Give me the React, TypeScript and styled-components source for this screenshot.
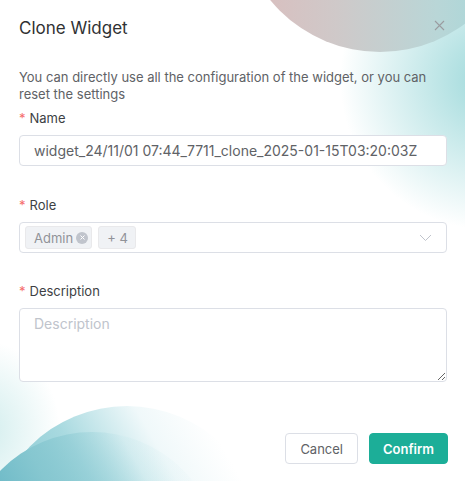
import React from 'react'
import styled, { createGlobalStyle } from 'styled-components'

const GlobalStyle = createGlobalStyle`
  html, body {
    margin: 0;
    padding: 0;
    background: #ffffff;
  }
  body {
    font-family: Inter, "Noto Sans", "Liberation Sans", sans-serif;
  }
`

const Dialog = styled.div`
  position: relative;
  width: 465px;
  height: 481px;
  overflow: hidden;
  background: #ffffff;
  box-sizing: border-box;
  padding: 0 18px 0 19px;
  display: flex;
  flex-direction: column;
`

const Blob = styled.div<{ $x: number; $y: number; $r: number; $bg: string }>`
  position: absolute;
  left: ${(p) => p.$x - p.$r}px;
  top: ${(p) => p.$y - p.$r}px;
  width: ${(p) => p.$r * 2}px;
  height: ${(p) => p.$r * 2}px;
  border-radius: 50%;
  background: ${(p) => p.$bg};
  pointer-events: none;
`

const Glow = styled.div`
  position: absolute;
  inset: 0;
  pointer-events: none;
  background:
    radial-gradient(ellipse 150px 150px at 490px 80px, rgba(140, 210, 212, 0.85), rgba(140, 210, 212, 0) 100%),
    radial-gradient(ellipse 80px 90px at -20px 430px, rgba(150, 214, 214, 0.45), rgba(150, 214, 214, 0) 100%);
`

const Content = styled.div`
  position: relative;
  display: flex;
  flex-direction: column;
  flex: 1;
`

const Header = styled.div`
  display: flex;
  align-items: center;
  justify-content: space-between;
  height: 56px;
`

const Title = styled.h2`
  margin: 0;
  font-size: 17px;
  font-weight: 400;
  color: #303133;
`

const CloseButton = styled.button`
  border: none;
  background: transparent;
  padding: 0;
  width: 16px;
  height: 16px;
  margin-top: -6px;
  display: flex;
  align-items: center;
  justify-content: center;
  color: #9a9ca0;
  cursor: pointer;
`

const Intro = styled.p`
  margin: 13px 0 4px;
  font-size: 13px;
  line-height: 17px;
  color: #606266;
`

const Field = styled.div<{ $gap?: number }>`
  display: flex;
  flex-direction: column;
  margin-bottom: ${(p) => p.$gap ?? 28}px;
`

const Label = styled.label`
  font-size: 13px;
  line-height: 22px;
  color: #3d3f44;
  margin-bottom: 6px;

  &::before {
    content: '*';
    color: #f56c6c;
    margin-right: 4px;
  }
`

const Input = styled.input`
  box-sizing: border-box;
  height: 31px;
  width: 100%;
  border: 1px solid #dcdfe6;
  border-radius: 4px;
  padding: 0 14px;
  font-family: inherit;
  font-size: 14px;
  color: #606266;
  background: #ffffff;
  outline: none;
`

const Select = styled.div`
  box-sizing: border-box;
  height: 31px;
  border: 1px solid #dcdfe6;
  border-radius: 4px;
  padding: 0 14px 0 5px;
  display: flex;
  align-items: center;
  gap: 6px;
  background: #ffffff;
`

const Tag = styled.span<{ $closable?: boolean }>`
  box-sizing: border-box;
  height: 23px;
  display: inline-flex;
  align-items: center;
  gap: 2px;
  padding: 0 ${(p) => (p.$closable ? 3 : 7)}px 0 8px;
  background: #f0f2f5;
  border: 1px solid #e9e9eb;
  border-radius: 3px;
  font-size: 13px;
  color: #909399;
`

const TagClose = styled.span`
  width: 12px;
  height: 12px;
  margin-left: 1px;
  border-radius: 50%;
  background: #c0c4cc;
  display: inline-flex;
  align-items: center;
  justify-content: center;
`

const Chevron = styled.span`
  margin-left: auto;
  display: flex;
  color: #c0c4cc;
`

const TextArea = styled.textarea`
  box-sizing: border-box;
  height: 74px;
  width: 100%;
  border: 1px solid #dcdfe6;
  border-radius: 4px;
  padding: 5px 14px;
  font-family: inherit;
  font-size: 14px;
  line-height: 20px;
  color: #606266;
  background: #ffffff;
  outline: none;
  resize: vertical;

  &::placeholder {
    color: #c0c4cc;
  }
`

const Footer = styled.div`
  display: flex;
  justify-content: flex-end;
  gap: 11px;
  margin-right: -1px;
  margin-top: 51px;
`

const Button = styled.button<{ $primary?: boolean }>`
  box-sizing: border-box;
  height: 31px;
  padding: 0 ${(p) => (p.$primary ? 13 : 14)}px;
  border-radius: 4px;
  font-family: inherit;
  font-size: 13px;
  font-weight: ${(p) => (p.$primary ? 600 : 400)};
  border: 1px solid ${(p) => (p.$primary ? '#1cae98' : '#dcdfe6')};
  background: ${(p) => (p.$primary ? '#1cae98' : '#ffffff')};
  color: ${(p) => (p.$primary ? '#ffffff' : '#606266')};
  cursor: pointer;
`

export default function App() {
  return (
    <>
      <GlobalStyle />
      <Dialog>
        <Glow />
        <Blob
          $x={380}
          $y={-90}
          $r={142}
          $bg="linear-gradient(90deg, #dcbcbc 0%, #cfc9c9 35%, #b9d6d7 70%, #9ed8da 100%)"
        />
        <Blob
          $x={127}
          $y={543}
          $r={137}
          $bg="linear-gradient(60deg, #74bfcb 20%, #a9dae0 50%, rgba(225, 242, 245, 0.5) 70%, rgba(255, 255, 255, 0) 85%)"
        />
        <Blob
          $x={92}
          $y={560}
          $r={128}
          $bg="linear-gradient(60deg, #5aafc0 25%, #86c7d0 50%, rgba(190, 228, 233, 0.2) 75%, rgba(255, 255, 255, 0) 90%)"
        />
        <Content>
          <Header>
            <Title>Clone Widget</Title>
            <CloseButton aria-label="Close">
              <svg width="11" height="11" viewBox="0 0 11 11">
                <path d="M1 1L10 10M10 1L1 10" stroke="currentColor" strokeWidth="1.1" fill="none" />
              </svg>
            </CloseButton>
          </Header>
          <Intro>
            You can directly use all the configuration of the widget, or you can reset the settings
          </Intro>
          <Field>
            <Label>Name</Label>
            <Input defaultValue="widget_24/11/01 07:44_7711_clone_2025-01-15T03:20:03Z" />
          </Field>
          <Field $gap={27}>
            <Label>Role</Label>
            <Select>
              <Tag $closable>
                Admin
                <TagClose>
                  <svg width="7" height="7" viewBox="0 0 7 7">
                    <path d="M1.5 1.5L5.5 5.5M5.5 1.5L1.5 5.5" stroke="#ffffff" strokeWidth="1" />
                  </svg>
                </TagClose>
              </Tag>
              <Tag>+ 4</Tag>
              <Chevron>
                <svg width="13" height="8" viewBox="0 0 13 8">
                  <path d="M1 1L6.5 6.5L12 1" stroke="currentColor" strokeWidth="1" fill="none" />
                </svg>
              </Chevron>
            </Select>
          </Field>
          <Field $gap={0}>
            <Label>Description</Label>
            <TextArea placeholder="Description" />
          </Field>
          <Footer>
            <Button>Cancel</Button>
            <Button $primary>Confirm</Button>
          </Footer>
        </Content>
      </Dialog>
    </>
  )
}
